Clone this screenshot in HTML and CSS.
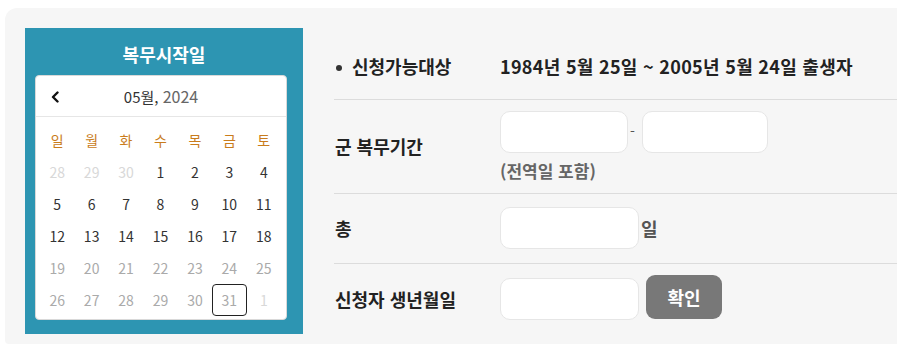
FILE: index.html
```html
<!DOCTYPE html>
<html lang="ko">
<head>
<meta charset="utf-8">
<title>복무시작일</title>
<link rel="stylesheet" href="styles.css">
</head>
<body>
<div class="panel">
  <section class="cal-wrap">
    <h2 class="cal-title">복무시작일</h2>
    <div class="cal">
      <div class="cal-head">
        <button class="prev" type="button" aria-label="이전 달">
          <svg width="9" height="12" viewBox="0 0 9 12"><polyline points="6.5,1.5 2,6 6.5,10.5" fill="none" stroke="#111" stroke-width="2.4" stroke-linecap="round" stroke-linejoin="round"/></svg>
        </button>
        <span class="ym"><span class="m">05월,</span> <span class="y">2024</span></span>
      </div>
      <div class="cal-grid">
        <span class="wd">일</span><span class="wd">월</span><span class="wd">화</span><span class="wd">수</span><span class="wd">목</span><span class="wd">금</span><span class="wd">토</span>
        <span class="d other">28</span><span class="d other">29</span><span class="d other">30</span><span class="d">1</span><span class="d">2</span><span class="d">3</span><span class="d">4</span>
        <span class="d">5</span><span class="d">6</span><span class="d">7</span><span class="d">8</span><span class="d">9</span><span class="d">10</span><span class="d">11</span>
        <span class="d">12</span><span class="d">13</span><span class="d">14</span><span class="d">15</span><span class="d">16</span><span class="d">17</span><span class="d">18</span>
        <span class="d off">19</span><span class="d off">20</span><span class="d off">21</span><span class="d off">22</span><span class="d off">23</span><span class="d off">24</span><span class="d off">25</span>
        <span class="d off">26</span><span class="d off">27</span><span class="d off">28</span><span class="d off">29</span><span class="d off">30</span><span class="d off sel">31</span><span class="d other">1</span>
      </div>
    </div>
  </section>

  <div class="form">
    <div class="row row-first">
      <div class="label bullet">신청가능대상</div>
      <div class="value strong">1984년 5월 25일 ~ 2005년 5월 24일 출생자</div>
    </div>
    <div class="row row-period">
      <div class="label">군 복무기간</div>
      <div class="value">
        <div class="pair">
          <input class="field f-short" type="text"><span class="dash">-</span><input class="field f-short2" type="text">
        </div>
        <div class="note">(전역일 포함)</div>
      </div>
    </div>
    <div class="row row-total">
      <div class="label">총</div>
      <div class="value inline">
        <input class="field f-mid" type="text"><span class="unit">일</span>
      </div>
    </div>
    <div class="row row-birth">
      <div class="label">신청자 생년월일</div>
      <div class="value inline top">
        <input class="field f-mid f-birth" type="text"><button class="btn" type="button">확인</button>
      </div>
    </div>
  </div>
</div>
</body>
</html>
```

FILE: styles.css
```css
html, body {
  margin: 0;
  padding: 0;
  overflow: hidden;
  background: #fff;
}
body {
  font-family: "Noto Sans CJK KR", "Noto Sans", sans-serif;
  color: #222;
}
.panel {
  margin: 8px 0 0 5px;
  width: 930px;
  height: 336px;
  box-sizing: border-box;
  background: #f6f6f6;
  border-radius: 12px 0 0 4px;
  padding: 20px 0 0 20px;
  display: flex;
  align-items: flex-start;
}

/* calendar */
.cal-wrap {
  width: 278px;
  height: 306px;
  box-sizing: border-box;
  background: #2d95b2;
  padding: 14px 0 0 10px;
  flex: none;
}
.cal-title {
  margin: 0 0 9px -10px;
  font-size: 18px;
  line-height: 24px;
  font-weight: 700;
  color: #fff;
  text-align: center;
}
.cal {
  width: 252px;
  height: 245px;
  box-sizing: border-box;
  background: #fff;
  border: 1px solid #d9d9d9;
  border-radius: 4px;
}
.cal-head {
  height: 40px;
  border-bottom: 1px solid #e6e6e6;
  display: flex;
  align-items: center;
  justify-content: center;
  position: relative;
}
.prev {
  position: absolute;
  left: 13px;
  top: 14px;
  width: 12px;
  height: 14px;
  padding: 0;
  border: 0;
  background: none;
  display: flex;
  align-items: center;
  justify-content: center;
}
.ym {
  font-size: 15px;
  line-height: 20px;
  color: #333;
}
.ym .y {
  font-size: 16px;
  color: #666;
}
.cal-grid {
  display: grid;
  grid-template-columns: repeat(7, 1fr);
  grid-auto-rows: 32px;
  padding: 7px 5px 0 4px;
}
.wd, .d {
  display: flex;
  align-items: center;
  justify-content: center;
  font-size: 14px;
}
.wd { color: #c97c1c; }
.d { color: #333; box-sizing: border-box; }
.d.off { color: #aaa; }
.d.other { color: #d8d8d8; }
.d.sel {
  border: 1px solid #222;
  border-radius: 4px;
}

/* form */
.form {
  flex: 1;
  margin-left: 31px;
}
.row {
  display: flex;
  align-items: center;
  border-bottom: 1px solid #dcdcdc;
}
.row:last-child { border-bottom: 0; }
.label {
  width: 166px;
  flex: none;
  font-size: 18px;
  line-height: 20px;
  font-weight: 700;
  color: #222;
  padding-left: 1px;
  box-sizing: border-box;
}
.bullet::before {
  content: "";
  display: inline-block;
  width: 6px;
  height: 6px;
  border-radius: 50%;
  background: #333;
  vertical-align: middle;
  margin: -3px 10px 0 1px;
}
.value {
  font-size: 18px;
  line-height: 20px;
}
.strong {
  font-weight: 700;
  color: #222;
  letter-spacing: 0.3px;
}
.row-first { padding: 28px 0 23px; }
.row-period { padding: 11px 0 12px; }
.row-total { padding: 13px 0 14px; }
.row-birth { padding: 11px 0 0; align-items: flex-start; }
.row-birth .label { margin-top: 14px; }

.pair { display: flex; align-items: center; }
.field {
  height: 42px;
  box-sizing: border-box;
  border: 1px solid #e6e6e6;
  border-radius: 10px;
  background: #fff;
  padding: 0 10px;
  font: inherit;
  outline: none;
}
.f-short { width: 128px; }
.f-short2 { width: 126px; }
.f-mid { width: 139px; }
.dash {
  width: 14px;
  padding-left: 2px;
  box-sizing: border-box;
  font-size: 14px;
  color: #555;
  margin-top: -3px;
}
.note {
  margin-top: 8px;
  color: #666;
  font-weight: 700;
  font-size: 17px;
}
.inline { display: flex; align-items: center; }
.inline.top { align-items: flex-start; }
.unit {
  margin-left: 2px;
  color: #555;
  font-weight: 700;
}
.f-birth { margin-top: 3px; }
.btn {
  margin-left: 7px;
  width: 76px;
  height: 44px;
  border: 0;
  border-radius: 9px;
  background: #787878;
  color: #fff;
  font: inherit;
  font-size: 18px;
  font-weight: 700;
}
```
